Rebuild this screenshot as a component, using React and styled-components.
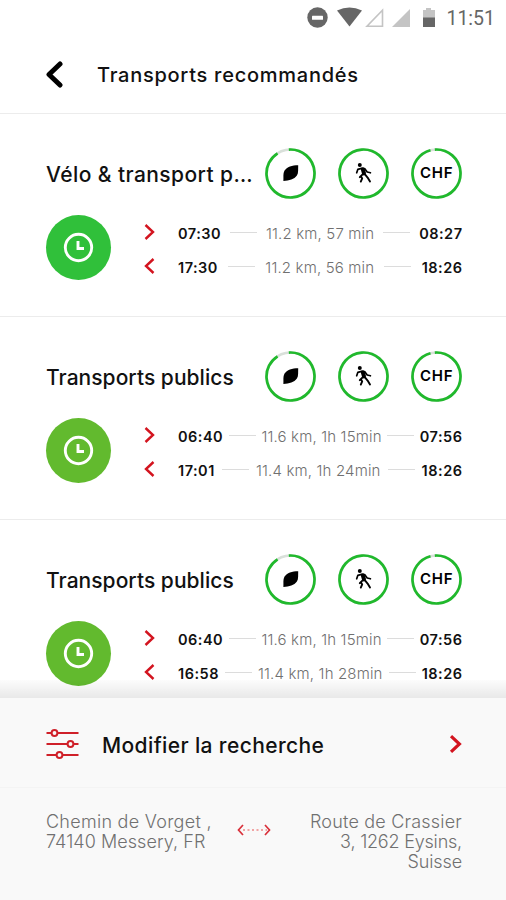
import styled, {createGlobalStyle} from "styled-components"

const GlobalStyle = createGlobalStyle`
    * {
        box-sizing: border-box;
    }

    body {
        margin: 0;
        background: #fff;
        color: #111;
        font-family: Inter, "Liberation Sans", sans-serif;
    }

    svg {
        display: block;
        flex: none;
    }
`

const Screen = styled.div`
    display: flex;
    flex-direction: column;
    width: 506px;
    height: 900px;
    overflow: hidden;
`

const StatusBar = styled.div`
    display: flex;
    align-items: center;
    justify-content: flex-end;
    height: 36px;
    flex: none;
    padding-right: 11px;
`

const Clock = styled.span`
    font-family: Roboto, sans-serif;
    font-size: 19.5px;
    color: #666;
    margin-left: 9px;
`

const Header = styled.header`
    display: flex;
    align-items: center;
    height: 78px;
    flex: none;
    padding: 0 0 1px 46px;
    border-bottom: 1px solid #ececec;
`

const Heading = styled.h1`
    margin: 2px 0 0 34px;
    font-size: 20px;
    font-weight: 500;
    letter-spacing: 0.74px;
    white-space: nowrap;
`

const List = styled.main`
    flex: 1;
    min-height: 0;
    overflow: hidden;
`

const Card = styled.section`
    height: 203px;
    padding: 34px 44px 0 46px;
    border-bottom: 1px solid #ececec;
`

const CardTop = styled.div`
    display: flex;
    align-items: center;
    justify-content: space-between;
    height: 51px;
`

const CardTitle = styled.h2`
    margin: 2px 0 0;
    font-size: 21px;
    font-weight: 500;
    letter-spacing: ${({$spacing}) => $spacing}px;
    white-space: nowrap;
`

const Rings = styled.div`
    display: flex;
    gap: 22px;
`

const CardBody = styled.div`
    display: flex;
    align-items: flex-start;
    margin-top: 16px;
`

const Badge = styled.div`
    display: flex;
    align-items: center;
    justify-content: center;
    width: 65px;
    height: 65px;
    border-radius: 50%;
    background: ${({$color}) => $color};
`

const Trips = styled.div`
    flex: 1;
    padding-left: 33px;
`

const Trip = styled.div`
    display: flex;
    align-items: center;
    height: 34px;
`

const TripLine = styled.div`
    display: flex;
    align-items: center;
    justify-content: space-between;
    width: 284px;
    margin: 2px 0 0 23px;
`

const Time = styled.span`
    font-size: 14.5px;
    font-weight: 600;
    letter-spacing: 0.5px;
    margin-right: ${({$last}) => $last ? "-0.5px" : 0};
`

const Detail = styled.span`
    font-size: 15px;
    font-weight: 300;
    color: #707070;
    letter-spacing: 0.16px;
    white-space: nowrap;
`

const Dash = styled.i`
    width: 27px;
    height: 1px;
    margin-top: -1px;
    background: #dcdcdc;
`

const Panel = styled.footer`
    position: relative;
    flex: none;
    height: 202px;
    background: #f9f9f9;

    &::before {
        content: "";
        position: absolute;
        left: 0;
        right: 0;
        top: -18px;
        height: 18px;
        background: linear-gradient(rgba(0, 0, 0, 0.01), rgba(0, 0, 0, 0.09));
    }
`

const EditRow = styled.div`
    display: flex;
    align-items: center;
    height: 90px;
    padding: 3px 44px 0 46px;
    border-bottom: 1px solid #f4f4f4;
`

const EditLabel = styled.span`
    flex: 1;
    margin: 3px 0 0 23px;
    font-size: 21px;
    font-weight: 500;
    letter-spacing: 0.38px;
`

const Route = styled.div`
    display: flex;
    justify-content: space-between;
    padding: 24px 44px 0 46px;
`

const Place = styled.p`
    width: 191px;
    margin: 0;
    font-size: 18px;
    font-weight: 300;
    line-height: 20px;
    color: #707070;
    text-align: ${({$align}) => $align || "left"};
    white-space: nowrap;
`

const PlaceLine = styled.span`
    display: block;
    letter-spacing: ${({$spacing}) => $spacing}px;
`

const Swap = styled.svg`
    margin-top: 12px;
`

const Chevron = ({dir = "right", size = "small"}) => {
    const big = size === "big"
    return (
        <svg width={big ? 13 : 11} height={big ? 18 : 16} viewBox="0 0 11 16" fill="none" stroke="#d3141f" strokeWidth={big ? 2.8 : 2.4}>
            <path d={dir === "right" ? "M1.5 1L9 8L1.5 15" : "M9.5 1L2 8L9.5 15"} />
        </svg>
    )
}

const Ring = ({gap = 0, children}) => (
    <svg width="51" height="51" viewBox="0 0 51 51">
        <circle cx="25.5" cy="25.5" r="24" fill="none" stroke="#d9e0da" strokeWidth="2.6" />
        <circle
            cx="25.5" cy="25.5" r="24" fill="none" stroke="#20b92c" strokeWidth="2.7"
            pathLength="100" strokeDasharray={`${100 - gap} ${gap}`} transform="rotate(-94 25.5 25.5)"
        />
        {children}
    </svg>
)

const Leaf = () => (
    <path d="M33.2 17.2C27 17.2 22 18.8 19.4 22.8C17.9 25.5 18.6 29 18.4 32.9C24.3 32.8 29.2 31.4 31.9 27.6C33.7 24.8 33 21 33.2 17.2Z" fill="#000" />
)

const Walker = () => (
    <g fill="none" stroke="#000" strokeLinecap="round" strokeLinejoin="round">
        <circle cx="21.8" cy="17" r="2" fill="#000" stroke="none" />
        <path d="M24.8 21.2L26 25.4" strokeWidth="4" />
        <path d="M23.6 20.4L19.8 21.4L18.7 24.8M26.6 20.6L29.2 24L32.4 24.8" strokeWidth="1.7" />
        <path d="M24.6 26.4L21.8 29.2M23.2 28.8L24.2 30.4L22.8 33.6M27 26.4L29.6 29.6L32 33.5" strokeWidth="1.9" />
    </g>
)

const ClockIcon = () => (
    <svg width="31" height="31" viewBox="0 0 31 31" fill="none" stroke="#fff" strokeWidth="2.9">
        <circle cx="15.5" cy="15.5" r="13.2" />
        <path d="M15 9V16.5H21" />
    </svg>
)

const trips = [
    {
        title: "Vélo & transport p…",
        spacing: 0.42,
        color: "#30c03a",
        there: ["07:30", "11.2 km, 57 min", "08:27"],
        back: ["17:30", "11.2 km, 56 min", "18:26"],
    },
    {
        title: "Transports publics",
        spacing: 0.04,
        color: "#62ba2e",
        there: ["06:40", "11.6 km, 1h 15min", "07:56"],
        back: ["17:01", "11.4 km, 1h 24min", "18:26"],
    },
    {
        title: "Transports publics",
        spacing: 0.04,
        color: "#62ba2e",
        there: ["06:40", "11.6 km, 1h 15min", "07:56"],
        back: ["16:58", "11.4 km, 1h 28min", "18:26"],
    },
]

const Leg = ({dir, leg}) => (
    <Trip>
        <Chevron dir={dir} />
        <TripLine>
            <Time>{leg[0]}</Time>
            <Dash />
            <Detail>{leg[1]}</Detail>
            <Dash />
            <Time $last>{leg[2]}</Time>
        </TripLine>
    </Trip>
)

const App = () => (
    <>
        <GlobalStyle />
        <Screen>
            <StatusBar>
                <svg width="130" height="22" viewBox="0 0 130 22">
                    <circle cx="10.5" cy="10.5" r="10.2" fill="#666" />
                    <rect x="5" y="8.7" width="11" height="4" rx="0.5" fill="#fff" />
                    <path d="M30 3.5Q42.5 -2.5 55 3.5L42.5 19.5Z" fill="#666" />
                    <path d="M75.500 3.300V19.300H60Z" fill="none" stroke="#c4c4c4" strokeWidth="1.6" />
                    <path d="M103 2V20H85Z" fill="#c4c4c4" />
                    <path d="M116 3H119V1H124V3H128V11H116Z" fill="#c4c4c4" />
                    <path d="M116 10.5H128V20H116Z" fill="#666" />
                </svg>
                <Clock>11:51</Clock>
            </StatusBar>
            <Header>
                <svg width="17" height="27" viewBox="0 0 17 27" fill="none" stroke="#000" strokeWidth="5" strokeLinecap="round" strokeLinejoin="round">
                    <path d="M14 3L3 13.5L14 24" />
                </svg>
                <Heading>Transports recommandés</Heading>
            </Header>
            <List>
                {trips.map((trip, i) => (
                    <Card key={i}>
                        <CardTop>
                            <CardTitle $spacing={trip.spacing}>{trip.title}</CardTitle>
                            <Rings>
                                <Ring gap={8}><Leaf /></Ring>
                                <Ring><Walker /></Ring>
                                <Ring gap={3}>
                                    <text x="25.7" y="30.3" textAnchor="middle" fontSize="15" fontWeight="600" letterSpacing="0.7">CHF</text>
                                </Ring>
                            </Rings>
                        </CardTop>
                        <CardBody>
                            <Badge $color={trip.color}><ClockIcon /></Badge>
                            <Trips>
                                <Leg dir="right" leg={trip.there} />
                                <Leg dir="left" leg={trip.back} />
                            </Trips>
                        </CardBody>
                    </Card>
                ))}
            </List>
            <Panel>
                <EditRow>
                    <svg width="33" height="32" viewBox="0 0 33 32" fill="#f9f9f9" stroke="#cf2029" strokeWidth="2">
                        <path d="M0.5 5H32.5M0.5 16H32.5M0.5 27H32.5" />
                        <circle cx="8.5" cy="5" r="2.9" />
                        <circle cx="24.5" cy="16" r="2.9" />
                        <circle cx="13.5" cy="27" r="2.9" />
                    </svg>
                    <EditLabel>Modifier la recherche</EditLabel>
                    <Chevron size="big" />
                </EditRow>
                <Route>
                    <Place>
                        <PlaceLine $spacing={0.27}>Chemin de Vorget ,</PlaceLine>
                        <PlaceLine $spacing={0.06}>74140 Messery, FR</PlaceLine>
                    </Place>
                    <Swap width="34" height="12" viewBox="0 0 34 12" fill="none" stroke="#d9303a" strokeWidth="1.7">
                        <path d="M6 1L1.5 6L6 11M28 1L32.5 6L28 11" />
                        <path d="M6 6H30" strokeDasharray="2 2.5" stroke="#e88" />
                    </Swap>
                    <Place $align="right">
                        <PlaceLine $spacing={0.2}>Route de Crassier</PlaceLine>
                        <PlaceLine $spacing={-0.2}>3, 1262 Eysins,</PlaceLine>
                        <PlaceLine $spacing={-0.1}>Suisse</PlaceLine>
                    </Place>
                </Route>
            </Panel>
        </Screen>
    </>
)

export default App
